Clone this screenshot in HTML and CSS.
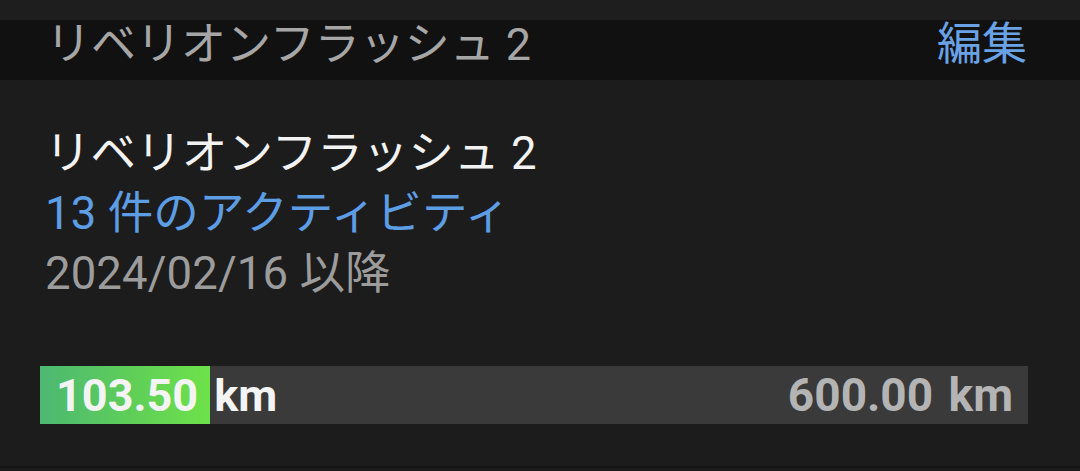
FILE: index.html
```html
<!DOCTYPE html>
<html lang="ja">
<head>
<meta charset="utf-8">
<link rel="stylesheet" href="styles.css">
</head>
<body>
<div class="top-strip"></div>
<header class="nav">
  <span class="nav-title">リベリオンフラッシュ 2</span>
  <span class="nav-edit">編集</span>
</header>
<main class="content">
  <div class="info">
    <div class="name">リベリオンフラッシュ 2</div>
    <div class="activities">13 件のアクティビティ</div>
    <div class="since">2024/02/16 以降</div>
  </div>
  <div class="bar">
    <div class="fill" style="width:17.25%"></div>
    <div class="labels">
      <span class="current">103.50 km</span>
      <span class="total">600.00 km</span>
    </div>
  </div>
</main>
<div class="bottom-line"></div>
</body>
</html>
```
FILE: styles.css
```css
html, body {
  margin: 0;
  padding: 0;
  background: #1c1c1c;
  width: 1080px;
  height: 471px;
  overflow: hidden;
  font-family: "Roboto", "Noto Sans CJK JP", sans-serif;
}
.top-strip {
  height: 20px;
  background: #1e1e1e;
}
.nav {
  height: 60px;
  background: #111111;
  display: flex;
  align-items: center;
  justify-content: space-between;
  padding: 0 53px 0 46px;
}
.nav-title {
  color: #a6a6a6;
  font-size: 45px;
  line-height: 1;
  margin-top: -12px;
}
.nav-edit {
  color: #6aa2e6;
  font-size: 45px;
  line-height: 1;
  margin-top: -12px;
}
.content {
  padding: 44px 52px 0 40px;
  height: 386px;
  box-sizing: border-box;
}
.info {
  padding-left: 5px;
  font-size: 45.5px;
  line-height: 60px;
  letter-spacing: 0.1px;
}
.name { color: #f2f2f2; }
.activities { color: #5d9de4; }
.since { color: #9c9c9c; }
.bar {
  position: relative;
  margin-top: 62px;
  height: 58px;
  background: #3a3a3a;
}
.fill {
  position: absolute;
  left: 0;
  top: 0;
  bottom: 0;
  background: linear-gradient(90deg, #4cb872 0%, #5fcf58 55%, #6de249 100%);
}
.labels {
  position: relative;
  height: 100%;
  display: flex;
  align-items: center;
  justify-content: space-between;
  padding: 0 15px 0 16px;
  font-weight: 700;
  font-size: 45px;
  word-spacing: 5px;
}
.current { color: #f4f4f4; }
.total { color: #b4b4b4; font-size: 46px; word-spacing: 4px; }
.bottom-line {
  height: 2px;
  background: #141414;
}
```
